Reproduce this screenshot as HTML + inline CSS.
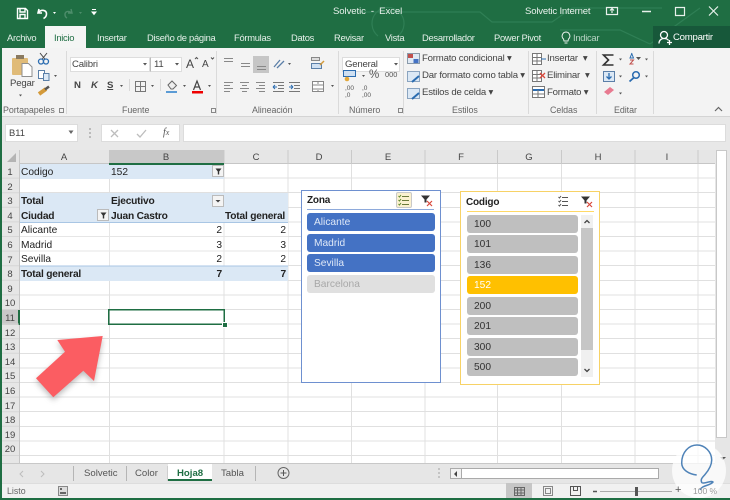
<!DOCTYPE html>
<html style="overflow:hidden;width:730px;height:500px"><head><meta charset="utf-8"><style>
html,body{margin:0;padding:0}
body{width:730px;height:500px;position:relative;overflow:hidden;background:#fff;font-family:"Liberation Sans",sans-serif;color:#333;filter:blur(.3px)}
.a{position:absolute}
.t{position:absolute;white-space:nowrap;line-height:14px}
.tab{font-size:9.4px;color:#e6f0ea;top:31px;letter-spacing:-.28px}
.rb{font-size:9.6px;color:#444;letter-spacing:-.2px}
.g{font-size:8.9px;color:#666;top:103px;letter-spacing:-.05px}
.ch{font-size:9.5px;color:#444;top:151px;width:40px;text-align:center}
.rh{font-size:9.5px;color:#444;left:0;width:20px;text-align:center}
.c{font-size:10.2px;color:#222}
.b{font-weight:bold;letter-spacing:-.2px}
.r{text-align:right}
.sb{position:absolute;border-radius:3px;font-size:10.2px;line-height:20px;padding-left:7px;box-sizing:border-box}
</style></head><body>

<!-- title + tab band -->
<div class="a" style="left:0;top:0;width:730px;height:48px;background:#1f6e43"></div>
<svg class="a" style="left:360px;top:0" width="370" height="48" fill="none" stroke="#2f7f55" stroke-width="1.2"><path d="M0 12H120l12 10h60l20-14h90M18 36a16 16 0 1 1 20 0M200 30h60l30 14M290 44L340 8"/></svg>
<!-- tab Inicio -->
<div class="a" style="left:45px;top:26px;width:41px;height:23px;background:#f4f5f4"></div>
<div class="a" style="left:653px;top:26px;width:77px;height:22px;background:#17583a"></div>

<!-- QAT -->
<svg class="a" style="left:0;top:0" width="110" height="26" fill="none" stroke="#fff" stroke-width="1.4">
<path d="M17.500 8.500h8l2 2v8h-10zM20 9v3h5V9M20 18.500v-4h5v4"/>
<path d="M39 9l-1 4h4M38.500 12.500c3-3.500 8-2.500 8 1.500 0 2-1 3.500-3 4.500" stroke-width="1.600"/>
<path d="M53 12h3l-1.500 2z" fill="#fff" stroke="none"/>
<path d="M71 9l1 4h-4M71 12.500c-3-2-6-1-6 2 0 2 1 3 2 3.500" stroke="#4d8d6b"/>
<path d="M79 12h3l-1.500 2z" fill="#4d8d6b" stroke="none"/>
<path d="M92 9.500h4M92 12h4l-2 2.500z" fill="#fff" stroke="#fff" stroke-width="1"/>
</svg>
<div class="t" style="left:333px;top:5px;font-size:9.6px;color:#e8f1ec;letter-spacing:-.1px">Solvetic&nbsp; - &nbsp;Excel</div>
<div class="t" style="left:525px;top:5px;font-size:9.6px;color:#e8f1ec;letter-spacing:-.2px">Solvetic Internet</div>
<svg class="a" style="left:600px;top:-1px" width="130" height="26" fill="none" stroke="#e8f1ec" stroke-width="1.2">
<path d="M6.500 8.500h11v7h-11zM12 14v-4M10 11.500l2-2 2 2"/>
<path d="M42 12.500h9" stroke-width="1.500"/>
<path d="M75.500 8.500h9v8h-9z"/>
<path d="M109 7.500l9 9M118 7.500l-9 9"/>
</svg>
<span class="t tab" style="left:7px">Archivo</span>
<span class="t tab" style="left:54px;color:#1f6e43">Inicio</span>
<span class="t tab" style="left:97px">Insertar</span>
<span class="t tab" style="left:147px">Diseño de página</span>
<span class="t tab" style="left:234px">Fórmulas</span>
<span class="t tab" style="left:291px">Datos</span>
<span class="t tab" style="left:334px">Revisar</span>
<span class="t tab" style="left:385px">Vista</span>
<span class="t tab" style="left:422px">Desarrollador</span>
<span class="t tab" style="left:494px">Power Pivot</span>
<span class="t tab" style="left:573px;color:#b9d4c5">Indicar</span>
<svg class="a" style="left:560px;top:30px" width="12" height="16" fill="none" stroke="#e8f1ec"><path d="M6 2a4 4 0 0 1 2.500 7l-.5 2H4l-.5-2A4 4 0 0 1 6 2zM4.500 13h3"/></svg>
<svg class="a" style="left:657px;top:29px" width="16" height="17" fill="none" stroke="#fff" stroke-width="1.300"><path d="M7 2.500a3.200 3.200 0 0 1 0 7 3.200 3.200 0 0 1 0-7zM2 14.500c0-3 2-5 5-5s4 1 4.500 2M10 13.500h5M12.500 11v5"/></svg>
<span class="t" style="left:673px;top:31px;font-size:9.6px;color:#fff;letter-spacing:-.25px">Compartir</span>

<!-- ribbon -->
<div class="a" style="left:0;top:48px;width:730px;height:68px;background:#f3f3f3"></div>
<div class="a" style="left:0;top:116px;width:730px;height:34px;background:#e8e8e8"></div>
<div class="a" style="left:0;top:116px;width:730px;height:1px;background:#d4d4d4"></div>
<div class="a" style="left:0;top:48px;width:2px;height:452px;background:#1f6e43"></div>
<!-- group separators -->
<svg class="a" style="left:0;top:48px" width="730" height="68" stroke="#dadada"><path d="M66.500 3v63M216.500 3v63M338.500 3v63M403.500 3v63M528.500 3v63M596.500 3v63M653.500 3v63"/></svg>
<!-- group labels -->
<span class="t g" style="left:3px">Portapapeles</span>
<span class="t g" style="left:122px">Fuente</span>
<span class="t g" style="left:252px">Alineación</span>
<span class="t g" style="left:349px">Número</span>
<span class="t g" style="left:452px">Estilos</span>
<span class="t g" style="left:550px">Celdas</span>
<span class="t g" style="left:614px">Editar</span>

<!-- clipboard -->
<svg class="a" style="left:0;top:48px" width="66" height="68" fill="none">
<rect x="12" y="10" width="16" height="17" rx="1" fill="#e0bb78"/><rect x="16" y="7" width="8" height="4" fill="#8a7a60"/>
<path d="M22 15.500h6.500l3.500 3.500v9.500H22z" fill="#fff" stroke="#8f8f8f"/>
<path d="M39 15l8-10M48 15l-8-10" stroke="#444" stroke-width="1"/>
<circle cx="41" cy="13.500" r="2.500" fill="#f3f3f3" stroke="#2b6cb0" stroke-width="1.300"/><circle cx="46" cy="13.500" r="2.500" fill="#f3f3f3" stroke="#2b6cb0" stroke-width="1.300"/>
<rect x="38.500" y="22.500" width="6" height="8" fill="#fff" stroke="#5a7fa8"/><rect x="43.500" y="25.500" width="5.500" height="7" fill="#dbe8f5" stroke="#5a7fa8"/>
<path d="M54 27h3l-1.500 2zM19 46.500h3l-1.500 2z" fill="#555"/>
<path d="M39 46l7-5" stroke="#d49a3a" stroke-width="4"/><path d="M45 41.500l4-3" stroke="#555" stroke-width="2.500"/>
<rect x="59.500" y="60.500" width="4" height="4" stroke="#888"/>
</svg>
<span class="t rb" style="left:10px;top:77px;font-size:9.6px">Pegar</span>

<!-- font group -->
<div class="a" style="left:70px;top:57px;width:80px;height:15px;background:#fff;border:1px solid #ddd;box-sizing:border-box"></div>
<div class="a" style="left:150px;top:57px;width:32px;height:15px;background:#fff;border:1px solid #ddd;border-left:1px solid #bbb;box-sizing:border-box"></div>
<span class="t rb" style="left:72px;top:58px;font-size:9.6px">Calibri</span>
<span class="t rb" style="left:154px;top:58px;font-size:9.6px">11</span>
<span class="t rb b" style="left:74px;top:79px;font-size:9.6px">N</span>
<span class="t rb b" style="left:91px;top:79px;font-size:9.6px;font-style:italic">K</span>
<span class="t rb b" style="left:107px;top:79px;font-size:9.6px;text-decoration:underline">S</span>
<span class="t rb" style="left:186px;top:57px;font-size:12px">A</span>
<span class="t rb" style="left:202px;top:58px;font-size:10px">A</span>
<svg class="a" style="left:0;top:48px" width="216" height="68" fill="none">
<path d="M143 15h4l-2 2.500zM175 15h4l-2 2.500zM120 37h3l-1.500 2zM151 37h3l-1.500 2zM183 37h3l-1.500 2zM208 37h3l-1.500 2z" fill="#555"/>
<path d="M195 11l1.500-1.500L198 11M211 9.500l1.500 1.500 1.500-1.500" stroke="#555"/>
<path d="M129.500 31v12" stroke="#d8d8d8"/><path d="M160.500 31v12" stroke="#d8d8d8"/>
<rect x="135.500" y="33.500" width="10" height="10" stroke="#777"/><path d="M140.500 34v9M136 38.500h9" stroke="#777"/>
<path d="M168 37l4-4 4.500 4.500-3.500 3.500h-2z" fill="#eee" stroke="#666"/><rect x="166" y="43" width="11" height="2" fill="#5b9bd5"/>
<path d="M193.500 42l3.500-9 3.500 9M195 39h4" stroke="#444" stroke-width="1.200"/><rect x="192" y="43" width="11" height="2.500" fill="#e00"/>
<rect x="211.500" y="60.500" width="4" height="4" stroke="#888"/>
</svg>

<!-- alignment -->
<div class="a" style="left:253px;top:56px;width:16px;height:17px;background:#c6c6c6"></div>
<svg class="a" style="left:216px;top:48px" width="122" height="68" fill="none" stroke="#888">
<path d="M8 10.500h9M8 13.500h9M25 15.500h9M25 18.500h9M41 18.500h9M41 21.500h9" />
<path d="M58 19l6-7M61 20l7-7" stroke="#5b7fa8" stroke-width="1.300"/>
<path d="M72 15h3l-1.500 2zM115 37h3l-1.500 2z" fill="#555" stroke="none"/>
<path d="M8 34.500h9M8 37.500h6M8 40.500h9M8 43.500h6M24 34.500h9M26 37.500h5M24 40.500h9M26 43.500h5M40 34.500h9M43 37.500h6M40 40.500h9M43 43.500h6"/>
<path d="M57 34.500h11M62 37.500h6M62 40.500h6M57 43.500h11M73 34.500h11M78 37.500h6M78 40.500h6M73 43.500h11" stroke="#777"/>
<path d="M57 39h4M57 39l2-2M57 39l2 2M77 39h-4M77 39l-2-2M77 39l-2 2" stroke="#2b6cb0" transform="translate(0 0)"/>
<rect x="95.500" y="9.500" width="8" height="3" fill="#ddd"/><rect x="95.500" y="15.500" width="10" height="5" fill="#cfe0f2" stroke="#5b7fa8"/><path d="M104 17l4-4" stroke="#d49a3a" stroke-width="1.500"/>
<rect x="96.500" y="33.500" width="11" height="10" fill="#fff"/><path d="M97 37h10M97 41h10M102 34v2M102 42v1"/>
</svg>

<!-- number -->
<div class="a" style="left:342px;top:57px;width:58px;height:15px;background:#fff;border:1px solid #ddd;box-sizing:border-box"></div>
<span class="t rb" style="left:345px;top:58px;font-size:9.6px">General</span>
<svg class="a" style="left:338px;top:48px" width="66" height="68" fill="none">
<path d="M56 15h4l-2 2.500zM24 27h3l-1.500 2z" fill="#555"/>
<rect x="5.500" y="22.500" width="12" height="6" fill="#cfe0f2" stroke="#2b6cb0"/><circle cx="9" cy="31" r="2.300" fill="#e2a83b"/>
<rect x="60.500" y="60.500" width="4" height="4" stroke="#888"/>
</svg>
<span class="t rb" style="left:369px;top:68px;font-size:11.5px;color:#555;letter-spacing:0">%</span>
<span class="t rb" style="left:385px;top:68px;font-size:7.4px;color:#555;letter-spacing:0">000</span>
<span class="t rb" style="left:345px;top:85px;font-size:6.5px;line-height:7px;color:#555;white-space:pre;letter-spacing:0">,00
,0</span>
<span class="t rb" style="left:362px;top:85px;font-size:6.5px;line-height:7px;color:#555;white-space:pre;letter-spacing:0">,0
,00</span>

<!-- styles -->
<svg class="a" style="left:407px;top:50px" width="15" height="60" fill="none">
<rect x=".5" y="3.500" width="12" height="10" fill="#dfe9f4" stroke="#8a9aaa"/><rect x="1" y="4" width="5" height="4" fill="#c0504d"/><rect x="6.500" y="9" width="5" height="4" fill="#4472c4"/>
<rect x=".5" y="21.500" width="12" height="10" fill="#dbe8f5" stroke="#8aa4c0"/><path d="M5 32l7-6" stroke="#2b6cb0" stroke-width="2"/>
<rect x=".5" y="38.500" width="12" height="10" fill="#dbe8f5" stroke="#8aa4c0"/><path d="M5 49l7-6" stroke="#2b6cb0" stroke-width="2"/>
</svg>
<span class="t rb" style="left:422px;top:52px">Formato condicional ▾</span>
<span class="t rb" style="left:422px;top:69px">Dar formato como tabla ▾</span>
<span class="t rb" style="left:422px;top:86px">Estilos de celda ▾</span>

<!-- cells -->
<svg class="a" style="left:531px;top:50px" width="16" height="60" fill="none" stroke="#777">
<rect x="1.500" y="3.500" width="9" height="11" fill="#fff"/><path d="M2 7.500h8M2 11h8M6 4v10"/><path d="M10 9h5" stroke="#2b6cb0"/>
<rect x="1.500" y="20.500" width="9" height="11" fill="#fff"/><path d="M2 24.500h8M2 28h8M6 21v10"/><path d="M9 23l5 5M14 23l-5 5" stroke="#d9483b" stroke-width="1.300"/>
<rect x="1.500" y="36.500" width="12" height="11" fill="#fff"/><path d="M2 40h11" stroke="#2b6cb0" stroke-width="2"/><path d="M2 44h11M7 40v7"/>
</svg>
<span class="t rb" style="left:547px;top:52px">Insertar &nbsp;▾</span>
<span class="t rb" style="left:547px;top:69px">Eliminar &nbsp;▾</span>
<span class="t rb" style="left:547px;top:86px">Formato ▾</span>

<!-- editing -->
<svg class="a" style="left:600px;top:50px" width="55" height="60" fill="none">
<path d="M13.500 5H3.500l5 5-5 5h10" stroke="#333" stroke-width="1.600"/>
<path d="M19 8.500h3L20.500 10.500zM45 8.500h3L46.500 10.500zM19 25.500h3L20.500 27.500zM45 25.500h3L46.500 27.500zM19 42.500h3L20.500 44.500z" fill="#555"/>
<path d="M32 3l-2 5h3.500l-2-5" stroke="#2b6cb0"/><path d="M30 10h3.500l-3.500 4h3.500" stroke="#c0504d"/><path d="M36 7h5l-2.500 3z" fill="#555"/>
<rect x="3.500" y="21.500" width="11" height="10" fill="#dbe8f5" stroke="#5b7fa8"/><path d="M9 23v5.500M6.500 26.500l2.500 2.500 2.500-2.500" stroke="#2b6cb0" stroke-width="1.300"/>
<circle cx="36" cy="25" r="3.300" stroke="#2b6cb0" stroke-width="1.500"/><path d="M34 27.500l-4.500 4" stroke="#2b6cb0" stroke-width="1.800"/>
<path d="M4 42l6-5 4 3-6 5z" fill="#e87a90"/>
</svg>
<svg class="a" style="left:713px;top:105px" width="12" height="8" fill="none" stroke="#666" stroke-width="1.200"><path d="M2 6l3.500-3.500L9 6"/></svg>

<!-- formula bar -->
<div class="a" style="left:5px;top:124px;width:73px;height:18px;background:#fff;border:1px solid #dcdcdc;box-sizing:border-box"></div>
<span class="t" style="left:9px;top:126px;font-size:9.4px;color:#444">B11</span>
<svg class="a" style="left:68px;top:130px" width="7" height="5"><path d="M.5 .5h5L3 4z" fill="#666"/></svg>
<svg class="a" style="left:88px;top:127px" width="6" height="12"><path d="M1 1h2v2H1zM1 5h2v2H1zM1 9h2v2H1z" fill="#bbb"/></svg>
<div class="a" style="left:101px;top:124px;width:79px;height:18px;background:#fff;border:1px solid #dcdcdc;box-sizing:border-box"></div>
<div class="a" style="left:183px;top:124px;width:543px;height:18px;background:#fff;border:1px solid #dcdcdc;box-sizing:border-box"></div>
<svg class="a" style="left:108px;top:128px" width="70" height="12" fill="none" stroke="#bdbdbd" stroke-width="1.300"><path d="M3 2l7 7M10 2l-7 7M29 6l3 3 6-7"/></svg>
<span class="t" style="left:163px;top:126px;font-size:10px;font-family:'Liberation Serif',serif;font-style:italic;color:#555">f<span style="font-size:8px">x</span></span>

<!-- sheet grid -->
<div class="a" style="left:2px;top:150px;width:713px;height:313px;background:
 repeating-linear-gradient(to bottom,transparent 0,transparent 13.6px,#e0e0e0 13.6px,#e0e0e0 14.6px) 0 14px,#fff"></div>
<svg class="a" style="left:0;top:150px" width="715" height="313" stroke="#e0e0e0"><path d="M109.500 0V313M224 0V313M288 0V313M351.500 0V313M425 0V313M497.500 0V313M561.500 0V313M635 0V313M698 0V313"/></svg>
<!-- pivot fills -->
<div class="a" style="left:20px;top:164px;width:204px;height:15px;background:#dbe8f5"></div>
<div class="a" style="left:20px;top:193px;width:268px;height:29px;background:#dbe8f5"></div>
<div class="a" style="left:20px;top:266px;width:268px;height:15px;background:#dbe8f5"></div>
<div class="a" style="left:20px;top:222px;width:268px;height:44px;background:#fff"></div>
<svg class="a" style="left:20px;top:222px" width="268" height="45" stroke="#e6e6e6"><path d="M0 14.500H268M0 29H268M89.500 0V44M204 0V44"/><path d="M0 44H268" stroke="#a9c6e4"/><path d="M0 .5H268" stroke="#a9c6e4"/></svg>

<!-- headers -->
<div class="a" style="left:2px;top:150px;width:713px;height:13px;background:#e6e6e6;border-bottom:1px solid #c6c6c6"></div>
<div class="a" style="left:2px;top:150px;width:18px;height:313px;background:#e6e6e6;border-right:1px solid #c6c6c6;box-sizing:border-box"></div>
<svg class="a" style="left:0;top:150px" width="715" height="14" stroke="#c9c9c9"><path d="M19.500 0V14M224 0V14M288 0V14M351.500 0V14M425 0V14M497.500 0V14M561.500 0V14M635 0V14M698 0V14"/><path d="M7 12l9 0 0-9z" fill="#b4b4b4" stroke="none"/></svg>
<div class="a" style="left:109px;top:150px;width:115px;height:13px;background:#c8c8c8"></div>
<div class="a" style="left:109px;top:163px;width:115px;height:2px;background:#1f6e43"></div>
<div class="a" style="left:2px;top:310px;width:17px;height:15px;background:#c8c8c8"></div>
<div class="a" style="left:18px;top:310px;width:2px;height:15px;background:#1f6e43"></div>
<svg class="a" style="left:2px;top:164px" width="18" height="299" stroke="#d6d6d6"><path d="M0 14.100H17M0 28.700H17M0 43.300H17M0 57.900H17M0 72.500H17M0 87.100H17M0 101.700H17M0 116.300H17M0 130.900H17M0 145.500H17M0 160.100H17M0 174.700H17M0 189.300H17M0 203.900H17M0 218.500H17M0 233.100H17M0 247.700H17M0 262.300H17M0 276.900H17M0 291.500H17"/></svg>
<span class="t ch" style="left:44px">A</span><span class="t ch" style="left:146px">B</span><span class="t ch" style="left:236px">C</span><span class="t ch" style="left:299px">D</span><span class="t ch" style="left:368px">E</span><span class="t ch" style="left:441px">F</span><span class="t ch" style="left:509px">G</span><span class="t ch" style="left:578px">H</span><span class="t ch" style="left:647px">I</span>
<span class="t rh" style="top:166px">1</span><span class="t rh" style="top:181px">2</span><span class="t rh" style="top:195px">3</span><span class="t rh" style="top:210px">4</span><span class="t rh" style="top:224px">5</span><span class="t rh" style="top:239px">6</span><span class="t rh" style="top:254px">7</span><span class="t rh" style="top:268px">8</span><span class="t rh" style="top:283px">9</span><span class="t rh" style="top:297px">10</span><span class="t rh" style="top:312px">11</span><span class="t rh" style="top:327px">12</span><span class="t rh" style="top:341px">13</span><span class="t rh" style="top:356px">14</span><span class="t rh" style="top:370px">15</span><span class="t rh" style="top:385px">16</span><span class="t rh" style="top:400px">17</span><span class="t rh" style="top:414px">18</span><span class="t rh" style="top:429px">19</span><span class="t rh" style="top:443px">20</span>

<!-- cells text -->
<span class="t c" style="left:21px;top:166px">Codigo</span><span class="t c" style="left:111px;top:166px">152</span>
<span class="t c b" style="left:21px;top:195px">Total</span><span class="t c b" style="left:111px;top:195px">Ejecutivo</span>
<span class="t c b" style="left:21px;top:210px">Ciudad</span><span class="t c b" style="left:111px;top:210px">Juan Castro</span><span class="t c b" style="left:225px;top:210px">Total general</span>
<span class="t c" style="left:21px;top:224px">Alicante</span><span class="t c r" style="left:170px;width:52px;top:224px">2</span><span class="t c r" style="left:234px;width:52px;top:224px">2</span>
<span class="t c" style="left:21px;top:239px">Madrid</span><span class="t c r" style="left:170px;width:52px;top:239px">3</span><span class="t c r" style="left:234px;width:52px;top:239px">3</span>
<span class="t c" style="left:21px;top:253px">Sevilla</span><span class="t c r" style="left:170px;width:52px;top:253px">2</span><span class="t c r" style="left:234px;width:52px;top:253px">2</span>
<span class="t c b" style="left:21px;top:268px">Total general</span><span class="t c b r" style="left:170px;width:52px;top:268px">7</span><span class="t c b r" style="left:234px;width:52px;top:268px">7</span>
<!-- filter buttons -->
<svg class="a" style="left:0;top:160px" width="230" height="70" fill="none">
<rect x="212.500" y="5.500" width="11" height="11" fill="#f4f4f4" stroke="#bbb"/><path d="M215.500 8.500h6l-2.300 3v3h-1.400v-3z" fill="#333"/>
<rect x="212.500" y="35.500" width="11" height="11" fill="#f4f4f4" stroke="#bbb"/><path d="M215.500 40h5l-2.500 2.500z" fill="#444"/>
<rect x="97.500" y="49.500" width="11" height="11" fill="#f4f4f4" stroke="#bbb"/><path d="M100.500 52.500h6l-2.300 3v3h-1.400v-3z" fill="#333"/>
</svg>

<!-- selection -->
<div class="a" style="left:108px;top:309px;width:117px;height:16px;border:1px solid #1f6e43;box-sizing:border-box;box-shadow:inset 0 0 0 .5px #1f6e43"></div>
<div class="a" style="left:222px;top:322px;width:4px;height:4px;background:#1f6e43;border:1px solid #fff"></div>

<!-- arrow -->
<svg class="a" style="left:20px;top:320px;overflow:visible" width="100" height="90">
<defs><filter id="f" x="-30%" y="-30%" width="160%" height="160%"><feGaussianBlur stdDeviation="3"/></filter></defs>
<polygon points="82.700,16 37.300,20 45,31.700 16,58.300 33.300,77.300 63.300,50.700 74,61" fill="#888" opacity=".55" filter="url(#f)" transform="translate(0,3)"/>
<polygon points="82.700,16 37.300,20 45,31.700 16,58.300 33.300,77.300 63.300,50.700 74,61" fill="#fb5d62"/>
</svg>

<!-- Zona slicer -->
<div class="a" style="left:301px;top:190px;width:140px;height:193px;background:#fff;border:1px solid #6e90d0;box-sizing:border-box"></div>
<span class="t b" style="left:307px;top:194px;font-size:10px;color:#222">Zona</span>
<div class="a" style="left:396px;top:192px;width:16px;height:16px;background:#fbf1cf;border:1px solid #c9c9c9;box-sizing:border-box;border-radius:2px"></div>
<svg class="a" style="left:396px;top:192px" width="45" height="18" fill="none" stroke="#555"><path d="M6 4.500h7M6 8.500h7M6 12.500h7" stroke="#6b7a3a"/><path d="M2.500 4l1 1 1.500-2M2.500 8l1 1 1.500-2M2.500 12l1 1 1.500-2" stroke="#5f8a2e"/><path d="M25 3.500h9l-3.500 4v3h-2v-3z" fill="#333" stroke="none"/><path d="M31 9l5 5M36 9l-5 5" stroke="#d9483b" stroke-width="1.200"/></svg>
<div class="a" style="left:307px;top:209px;width:127px;height:1px;background:#8eaadb"></div>
<div class="sb" style="left:307px;top:213px;width:128px;height:18px;background:#4472c4;color:#dfe8f7">Alicante</div>
<div class="sb" style="left:307px;top:234px;width:128px;height:18px;background:#4472c4;color:#dfe8f7">Madrid</div>
<div class="sb" style="left:307px;top:254px;width:128px;height:18px;background:#4472c4;color:#dfe8f7">Sevilla</div>
<div class="sb" style="left:307px;top:275px;width:128px;height:18px;background:#e0e0e0;color:#a8a8a8">Barcelona</div>

<!-- Codigo slicer -->
<div class="a" style="left:460px;top:191px;width:140px;height:194px;background:#fff;border:1px solid #f7d266;box-sizing:border-box"></div>
<span class="t b" style="left:466px;top:196px;font-size:10px;color:#222">Codigo</span>
<svg class="a" style="left:556px;top:193px" width="40" height="18" fill="none" stroke="#555"><path d="M6 4.500h6M6 8.500h6M6 12.500h6"/><path d="M2.500 4l1 1 1.500-2M2.500 8l1 1 1.500-2M2.500 12l1 1 1.500-2"/><path d="M25 3.500h9l-3.500 4v3h-2v-3z" fill="#333" stroke="none"/><path d="M31 9l5 5M36 9l-5 5" stroke="#d9483b" stroke-width="1.200"/></svg>
<div class="a" style="left:467px;top:211px;width:127px;height:1px;background:#ffd966"></div>
<div class="sb" style="left:467px;top:215px;width:111px;height:18px;background:#bfbfbf;color:#333">100</div>
<div class="sb" style="left:467px;top:235px;width:111px;height:18px;background:#bfbfbf;color:#333">101</div>
<div class="sb" style="left:467px;top:256px;width:111px;height:18px;background:#bfbfbf;color:#333">136</div>
<div class="sb" style="left:467px;top:276px;width:111px;height:18px;background:#ffc000;color:#fff">152</div>
<div class="sb" style="left:467px;top:297px;width:111px;height:18px;background:#bfbfbf;color:#333">200</div>
<div class="sb" style="left:467px;top:317px;width:111px;height:18px;background:#bfbfbf;color:#333">201</div>
<div class="sb" style="left:467px;top:338px;width:111px;height:18px;background:#bfbfbf;color:#333">300</div>
<div class="sb" style="left:467px;top:358px;width:111px;height:18px;background:#bfbfbf;color:#333">500</div>
<div class="a" style="left:581px;top:215px;width:12px;height:162px;background:#f0f0f0"></div>
<div class="a" style="left:581px;top:228px;width:12px;height:122px;background:#c6c6c6"></div>
<svg class="a" style="left:581px;top:215px" width="12" height="162" fill="none" stroke="#444" stroke-width="1.300"><path d="M3.500 8l2.500-2.500L8.500 8M3.500 154l2.500 2.500 2.500-2.500"/></svg>

<!-- vertical scrollbar -->
<div class="a" style="left:715px;top:150px;width:15px;height:348px;background:#e6e6e6"></div>
<div class="a" style="left:716px;top:150px;width:11px;height:288px;background:#fff;border:1px solid #c8c8c8;box-sizing:border-box"></div>
<svg class="a" style="left:719px;top:456px" width="8" height="6"><path d="M1 1h6L4 4z" fill="#555"/></svg>

<!-- tabs bar -->
<div class="a" style="left:2px;top:463px;width:713px;height:20px;background:#e6e6e6;border-top:1px solid #c8c8c8;box-sizing:border-box"></div>
<svg class="a" style="left:0;top:463px" width="300" height="20" fill="none">
<path d="M23 8l-3 3 3 3M41 8l3 3-3 3" stroke="#bdbdbd" stroke-width="1"/>
<path d="M73.500 3v15M126.500 3v15M168 3v15M255.500 3v15" stroke="#b5b5b5"/>
<circle cx="283.500" cy="10" r="5.500" stroke="#666"/><path d="M283.500 7v6M280.500 10h6" stroke="#555"/>
</svg>
<div class="a" style="left:168px;top:464px;width:44px;height:16px;background:#fff"></div>
<div class="a" style="left:168px;top:479px;width:44px;height:2px;background:#1f6e43"></div>
<span class="t" style="left:84px;top:467px;font-size:9.6px;color:#555">Solvetic</span>
<span class="t" style="left:135px;top:467px;font-size:9.6px;color:#555">Color</span>
<span class="t b" style="left:177px;top:467px;font-size:9.6px;color:#1f6e43;letter-spacing:0">Hoja8</span>
<span class="t" style="left:221px;top:467px;font-size:9.6px;color:#555">Tabla</span>
<!-- horiz scrollbar -->
<svg class="a" style="left:437px;top:467px" width="6" height="14"><path d="M1 1h2v2H1zM1 5h2v2H1zM1 9h2v2H1z" fill="#c4c4c4"/></svg>
<div class="a" style="left:450px;top:468px;width:209px;height:11px;background:#fff;border:1px solid #aaa;box-sizing:border-box"></div>
<div class="a" style="left:450px;top:468px;width:12px;height:11px;background:#f2f2f2;border:1px solid #aaa;box-sizing:border-box"></div>
<svg class="a" style="left:453px;top:471px" width="6" height="6"><path d="M4 0v6L1 3z" fill="#444"/></svg>

<!-- status bar -->
<div class="a" style="left:2px;top:483px;width:728px;height:15px;background:#f1f1f1;border-top:1px solid #ddd;box-sizing:border-box"></div>
<div class="a" style="left:0;top:498px;width:730px;height:2px;background:#1f6e43"></div>
<span class="t" style="left:7px;top:484px;font-size:8.8px;color:#666">Listo</span>
<svg class="a" style="left:57px;top:485px" width="12" height="12" fill="none"><rect x="1.500" y="1.500" width="9" height="9" fill="#ddd" stroke="#888"/><path d="M3 3h2v2H3zM3 7h6v2H3z" fill="#666"/></svg>
<div class="a" style="left:506px;top:483px;width:26px;height:15px;background:#c6c6c6"></div>
<svg class="a" style="left:500px;top:483px" width="230" height="15" fill="none" stroke="#666">
<path d="M14.500 4.500h10v8h-10zM17.500 4.500v8M21 4.500v8M14.500 7h10M14.500 10h10"/>
<path d="M43.500 3.500h9v9h-9zM45.500 5.500h5v5h-5z" stroke="#888"/>
<path d="M70.500 3.500h10v9h-10zM73.500 3.500v4h4v-4" stroke="#555"/>
<path d="M100 8.500h72" stroke="#aaa"/><path d="M93 8.500h4" stroke="#555" stroke-width="1.500"/>
<rect x="135.500" y="4.500" width="2" height="8" fill="#555" stroke="#555"/>
</svg>

<!-- watermark logo -->
<div class="a" style="left:672px;top:443px;width:54px;height:55px;border-radius:50%;background:rgba(255,255,255,.75)"></div>
<svg class="a" style="left:670px;top:440px" width="55" height="55" fill="none" stroke="#4f83b8" stroke-width="1.500">
<path d="M26.700 35C19 34 11.700 30 11.700 23 11.700 12 19 5 27 5 35 5 41.700 12 41.700 20 41.700 26 38 31 35 34.500 33 37 30 39 31.700 42.500 33 44.500 42 40 43 42 40 46 32 45 30 50"/>
</svg>
<span class="t" style="left:693px;top:484px;font-size:8.5px;color:#9a9a9a">100 %</span>
<span class="t" style="left:675px;top:483px;font-size:11px;color:#555">+</span>
</body></html>
